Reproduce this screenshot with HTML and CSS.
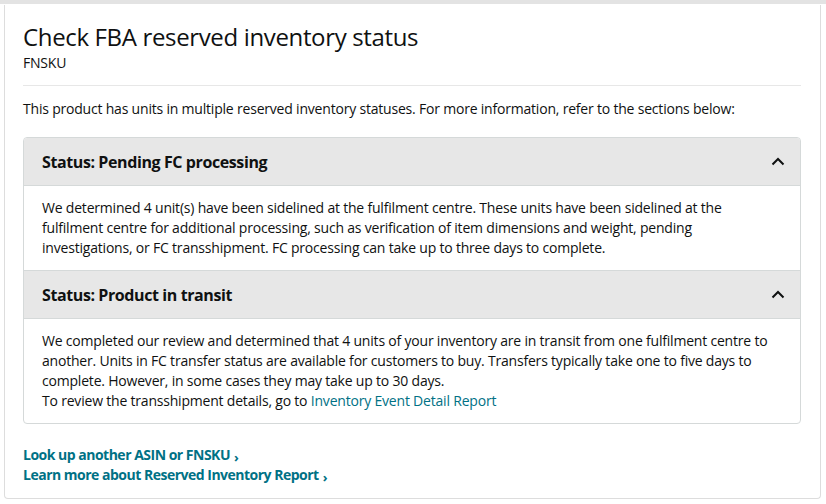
FILE: index.html
```html
<!DOCTYPE html>
<html>
<head>
<meta charset="utf-8">
<link rel="stylesheet" href="styles.css">
</head>
<body>
<div class="topbar"></div>
<div class="card">
  <h1 class="title">Check FBA reserved inventory status</h1>
  <div class="sub">FNSKU</div>
  <hr class="divider">
  <p class="intro">This product has units in multiple reserved inventory statuses. For more information, refer to the sections below:</p>
  <div class="accordion">
    <div class="acc-head">
      <span>Status: Pending FC processing</span>
      <svg class="chev" width="14" height="9" viewBox="0 0 14 9"><path d="M1.5 7.5 L7 2 L12.5 7.5" fill="none" stroke="#0f1111" stroke-width="2"/></svg>
    </div>
    <div class="acc-body">We determined 4 unit(s) have been sidelined at the fulfilment centre. These units have been sidelined at the fulfilment centre for additional processing, such as verification of item dimensions and weight, pending investigations, or FC transshipment. FC processing can take up to three days to complete.</div>
    <div class="acc-head">
      <span>Status: Product in transit</span>
      <svg class="chev" width="14" height="9" viewBox="0 0 14 9"><path d="M1.5 7.5 L7 2 L12.5 7.5" fill="none" stroke="#0f1111" stroke-width="2"/></svg>
    </div>
    <div class="acc-body">We completed our review and determined that 4 units of your inventory are in transit from one fulfilment centre to another. Units in FC transfer status are available for customers to buy. Transfers typically take one to five days to complete. However, in some cases they may take up to 30 days.<br>To review the transshipment details, go to <a class="link" href="#">Inventory Event Detail Report</a></div>
  </div>
  <div class="links">
    <a class="bold-link" href="#">Look up another ASIN or FNSKU<span class="arr">›</span></a>
    <a class="bold-link" href="#">Learn more about Reserved Inventory Report<span class="arr">›</span></a>
  </div>
</div>
</body>
</html>
```
FILE: styles.css
```css
* { box-sizing: border-box; }
html, body { margin: 0; padding: 0; background: #fff; }
body {
  font-family: "Open Sans", "Noto Sans", sans-serif;
  color: #0f1111;
  font-size: 14px;
  letter-spacing: -0.2px;
  width: 826px;
  height: 504px;
  overflow: hidden;
}
.topbar { height: 4px; background: #e3e3e3; }
.card {
  margin: 1px 5px 0 4px;
  border: 1px solid #dddddd;
  border-top: none;
  border-radius: 0 0 4px 4px;
  padding: 16px 19px 22px 18px;
  height: 494px;
}
.title {
  margin: 0;
  font-size: 24px;
  font-weight: 400;
  line-height: 32px;
  letter-spacing: -0.35px;
}
.sub { font-size: 14px; line-height: 18px; margin-top: 1px; }
.divider {
  border: 0;
  border-top: 1px solid #e7e7e7;
  margin: 13px 0 13px;
}
.intro { margin: 0 0 18px; line-height: 20px; }
.accordion {
  border: 1px solid #d5d9d9;
  border-radius: 4px;
  overflow: hidden;
}
.acc-head {
  display: flex;
  justify-content: space-between;
  align-items: center;
  background: #e7e7e7;
  height: 48px;
  padding: 0 15px 0 18px;
  font-weight: 700;
  font-size: 16px;
  letter-spacing: -0.4px;
  border-bottom: 1px solid #d5d9d9;
}
.acc-body {
  padding: 12px 18px 12px;
  line-height: 20px;
  border-bottom: 1px solid #d5d9d9;
}
.acc-body:last-child { border-bottom: none; }
.link { color: #007185; text-decoration: none; }
.links {
  display: flex;
  flex-direction: column;
  margin-top: 21px;
}
.bold-link {
  color: #007185;
  font-weight: 700;
  letter-spacing: -0.5px;
  text-decoration: none;
  line-height: 19px;
}
.arr { font-size: 13px; margin-left: 4px; position: relative; top: 2px; }
```
